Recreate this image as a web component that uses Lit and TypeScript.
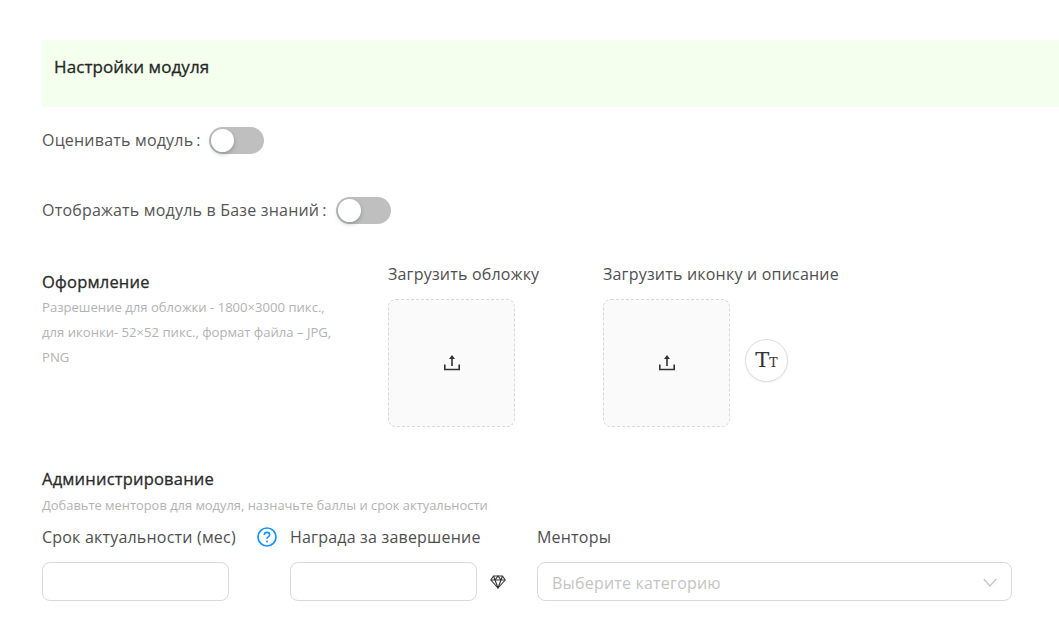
import { LitElement, html, css } from "lit";
import { customElement } from "lit/decorators.js";

const upload = html`<svg class="up" width="18" height="17" viewBox="0 0 18 17" fill="none" stroke="#333" stroke-width="1.6"><path d="M1.8 10.5v5h14.4v-5"/><path d="M9 12V4"/><path d="M9 1l3 4H6z" fill="#333" stroke="none"/></svg>`;

@customElement("app-root")
export class AppRoot extends LitElement {
  static styles = css`
    :host { display: block; width: 1059px; height: 641px; overflow: hidden; background: #fff; font-family: "Open Sans", "Noto Sans", sans-serif; color: #2b2b2b; letter-spacing: .2px; }
    .page { padding: 40px 0 0 42px; display: flex; flex-direction: column; }
    .band { height: 67px; background: #f4ffed; padding: 17px 0 0 12px; box-sizing: border-box; font-size: 17px; letter-spacing: .1px; -webkit-text-stroke: .3px #262626; line-height: 20px; color: #262626; }
    .row { display: flex; align-items: center; height: 27px; font-size: 16px; line-height: 25px; color: #555; }
    .row.a { margin-top: 20px; }
    .row.b { margin-top: 43px; }
    .colon { margin: 0 8.5px 0 3px; }
    .row.b .colon { margin-right: 9.5px; }
    .sw { width: 55px; height: 27px; border-radius: 14px; background: #bfbfbf; position: relative; }
    .sw::after { content: ""; position: absolute; left: 2px; top: 2px; width: 23px; height: 23px; border-radius: 50%; background: #fff; box-shadow: 0 2px 4px rgba(0,35,11,.25); }
    .design { display: flex; margin-top: 39px; }
    .info { width: 346px; padding-top: 8px; box-sizing: border-box; }
    h3 { margin: 0; font-size: 16.5px; font-weight: 400; -webkit-text-stroke: .3px #2b2b2b; line-height: 22px; color: #2b2b2b; }
    .hint { font-size: 13.1px; letter-spacing: 0; line-height: 25px; color: #b2b2b2; width: 300px; margin-top: 2px; }
    .col { display: flex; flex-direction: column; }
    .col.c1 { width: 215px; }
    .lbl { font-size: 16px; line-height: 22px; color: #4f4f4f; white-space: nowrap; }
    .boxes { display: flex; align-items: center; gap: 15px; margin-top: 14px; }
    .box { width: 127px; height: 128px; box-sizing: border-box; border: 1px dashed #d9d9d9; border-radius: 8px; background: #fafafa; display: flex; align-items: center; justify-content: center; padding-bottom: 2px; }
    .tt { width: 43px; height: 43px; margin-bottom: 5px; box-sizing: border-box; border: 1px solid #dcdcdc; border-radius: 50%; background: #fff; box-shadow: 0 1px 2px rgba(0,0,0,.06); display: flex; align-items: baseline; justify-content: center; font-family: "DejaVu Serif", "Liberation Serif", serif; color: #333; line-height: 40px; letter-spacing: 0; -webkit-text-stroke: .1px #333; }
    .tt b { font-weight: 400; font-size: 21px; }
    .tt i { font-style: normal; font-size: 12.5px; }
    .admin { margin-top: 41px; }
    .admin .hint2 { font-size: 12.9px; letter-spacing: 0; line-height: 16px; color: #b2b2b2; margin-top: 7px; }
    .fields { display: flex; margin-top: 13px; }
    .f { display: flex; flex-direction: column; }
    .f1 { width: 248px; }
    .f2 { width: 247px; }
    .f3 { width: 475px; }
    .labelrow { display: flex; align-items: center; height: 22px; }
    .help { margin-left: 21px; }
    .inputrow { display: flex; align-items: center; margin-top: 14px; }
    .input { width: 187px; height: 39px; box-sizing: border-box; border: 1px solid #d9d9d9; border-radius: 8px; background: #fff; }
    .gem { margin-left: 13px; }
    .select { width: 475px; height: 39px; box-sizing: border-box; border: 1px solid #d9d9d9; border-radius: 8px; display: flex; align-items: center; justify-content: space-between; padding: 2px 14px 0 14px; font-size: 16px; color: #c4c4c4; }
  `;

  render() {
    return html`<div class="page">
      <div class="band">Настройки модуля</div>
      <div class="row a"><span>Оценивать модуль</span><span class="colon">:</span><div class="sw"></div></div>
      <div class="row b"><span>Отображать модуль в Базе знаний</span><span class="colon">:</span><div class="sw"></div></div>
      <div class="design">
        <div class="info">
          <h3>Оформление</h3>
          <div class="hint">Разрешение для обложки - 1800×3000 пикс., для иконки- 52×52 пикс., формат файла – JPG, PNG</div>
        </div>
        <div class="col c1">
          <div class="lbl">Загрузить обложку</div>
          <div class="boxes"><div class="box">${upload}</div></div>
        </div>
        <div class="col">
          <div class="lbl">Загрузить иконку и описание</div>
          <div class="boxes"><div class="box">${upload}</div><div class="tt"><b>T</b><i>T</i></div></div>
        </div>
      </div>
      <div class="admin">
        <h3>Администрирование</h3>
        <div class="hint2">Добавьте менторов для модуля, назначьте баллы и срок актуальности</div>
        <div class="fields">
          <div class="f f1">
            <div class="labelrow lbl"><span>Срок актуальности (мес)</span>
              <svg class="help" width="20" height="20" viewBox="0 0 20 20" fill="none"><circle cx="10" cy="10" r="9" stroke="#1890ff" stroke-width="1.7"/><path d="M7.3 8c0-1.6 1.2-2.6 2.7-2.6s2.7 1 2.7 2.4c0 2-2.7 2-2.7 4" stroke="#1890ff" stroke-width="1.6"/><circle cx="10" cy="14.5" r="1" fill="#1890ff"/></svg>
            </div>
            <div class="inputrow"><div class="input"></div></div>
          </div>
          <div class="f f2">
            <div class="labelrow lbl">Награда за завершение</div>
            <div class="inputrow"><div class="input"></div>
              <svg class="gem" width="16" height="14" viewBox="0 0 16 14" fill="none" stroke="#333" stroke-width="1.1" stroke-linejoin="round"><path d="M3.5 1h9L15.2 5 8 13 .8 5z"/><path d="M.8 5h14.4M5 5l3 8 3-8M3.5 1 5 5l3-4 3 4 1.5-4"/></svg>
            </div>
          </div>
          <div class="f f3">
            <div class="labelrow lbl">Менторы</div>
            <div class="inputrow"><div class="select"><span>Выберите категорию</span>
              <svg width="14" height="9" viewBox="0 0 14 9" fill="none" stroke="#c4c4c4" stroke-width="1.2"><path d="M.8 1l6.2 7 6.2-7"/></svg>
            </div></div>
          </div>
        </div>
      </div>
    </div>`;
  }
}
